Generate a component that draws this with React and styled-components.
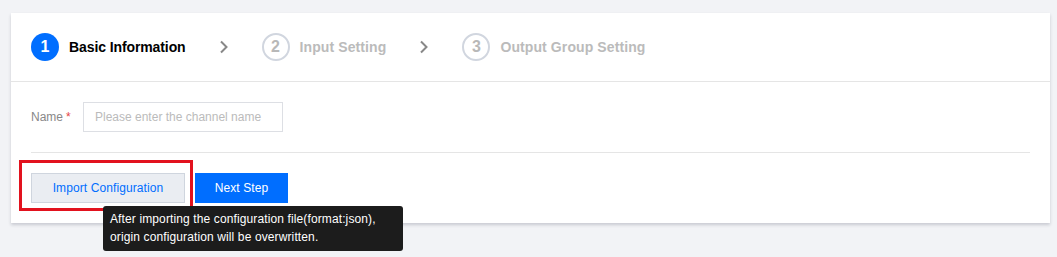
import React from "react";
import styled, { createGlobalStyle } from "styled-components";

const Global = createGlobalStyle`
  html, body { margin: 0; padding: 0; background: #f2f3f6; }
  body { font-family: "Liberation Sans", Arial, sans-serif; }
  * { box-sizing: border-box; }
`;

const Page = styled.div`
  width: 1057px;
  height: 257px;
  padding: 13px 7px 0 11px;
`;

const Card = styled.div`
  width: 1039px;
  height: 210px;
  background: #fff;
  box-shadow: 0 2px 3px rgba(54, 58, 80, 0.22);
  display: flex;
  flex-direction: column;
`;

const StepsBar = styled.div`
  height: 69px;
  border-bottom: 1px solid #e5e5e5;
  display: flex;
  align-items: center;
  padding: 0 20px 0 20px;
`;

const Step = styled.div`
  display: flex;
  align-items: center;
  gap: 10px;
`;

const Circle = styled.div`
  width: 28px;
  height: 28px;
  border-radius: 50%;
  display: flex;
  align-items: center;
  justify-content: center;
  font-size: 16px;
  font-weight: 700;
  background: ${(p) => (p.$active ? "#006eff" : "#fff")};
  color: ${(p) => (p.$active ? "#fff" : "#b8b8b8")};
  border: ${(p) => (p.$active ? "none" : "2px solid #d1d6df")};
`;

const StepLabel = styled.span`
  font-size: 14px;
  font-weight: 700;
  letter-spacing: ${(p) => (p.$active ? "-0.1px" : "0.1px")};
  color: ${(p) => (p.$active ? "#000" : "#bbb")};
`;

const Chevron = styled.span`
  display: flex;
  align-items: center;
  margin: 0 33px 0 33px;
`;

const Body = styled.div`
  padding: 20px 20px 0 20px;
  display: flex;
  flex-direction: column;
`;

const FormRow = styled.div`
  display: flex;
  align-items: center;
  height: 30px;
`;

const Label = styled.label`
  font-size: 12px;
  color: #888;
  width: 52px;
`;

const Required = styled.span`
  color: #e54545;
  margin-left: 3px;
`;

const Input = styled.input`
  width: 200px;
  height: 30px;
  border: 1px solid #dddfe4;
  padding: 0 11px;
  font-family: inherit;
  font-size: 12px;
  outline: none;
  &::placeholder { color: #bbb; }
`;

const Divider = styled.div`
  height: 1px;
  background: #e5e5e5;
  margin-top: 20px;
  width: 999px;
`;

const Actions = styled.div`
  display: flex;
  gap: 10px;
  margin-top: 20px;
  position: relative;
`;

const Button = styled.button`
  height: 30px;
  padding: 0;
  width: ${(p) => (p.$primary ? "93px" : "154px")};
  font-family: inherit;
  font-size: 12px;
  letter-spacing: 0.1px;
  cursor: pointer;
  background: ${(p) => (p.$primary ? "#006eff" : "#eaedf2")};
  color: ${(p) => (p.$primary ? "#fff" : "#006eff")};
  border: 1px solid ${(p) => (p.$primary ? "#006eff" : "#cfd5de")};
`;

const Highlight = styled.div`
  position: absolute;
  left: -12px;
  top: -13px;
  width: 174px;
  height: 51px;
  border: 3px solid #e2121e;
  pointer-events: none;
`;

const Tooltip = styled.div`
  position: absolute;
  left: 72px;
  top: 33px;
  width: 300px;
  padding: 4px 7px 5px 7px;
  background: #1c1c1c;
  border-radius: 3px;
  color: #fff;
  font-size: 12px;
  letter-spacing: 0.12px;
  line-height: 18px;
`;

const ChevronIcon = () => (
  <svg width="10" height="14" viewBox="0 0 10 14">
    <path d="M2 1.5 L7.5 7 L2 12.5" fill="none" stroke="#888" strokeWidth="2" />
  </svg>
);

const steps = ["Basic Information", "Input Setting", "Output Group Setting"];

export default function App() {
  return (
    <>
      <Global />
      <Page>
        <Card>
          <StepsBar>
            {steps.map((s, i) => (
              <React.Fragment key={s}>
                {i > 0 && (
                  <Chevron>
                    <ChevronIcon />
                  </Chevron>
                )}
                <Step>
                  <Circle $active={i === 0}>{i + 1}</Circle>
                  <StepLabel $active={i === 0}>{s}</StepLabel>
                </Step>
              </React.Fragment>
            ))}
          </StepsBar>
          <Body>
            <FormRow>
              <Label>
                Name<Required>*</Required>
              </Label>
              <Input placeholder="Please enter the channel name" />
            </FormRow>
            <Divider />
            <Actions>
              <Button>Import Configuration</Button>
              <Button $primary>Next Step</Button>
              <Highlight />
              <Tooltip>
                After importing the configuration file(format:json),
                <br />
                origin configuration will be overwritten.
              </Tooltip>
            </Actions>
          </Body>
        </Card>
      </Page>
    </>
  );
}
